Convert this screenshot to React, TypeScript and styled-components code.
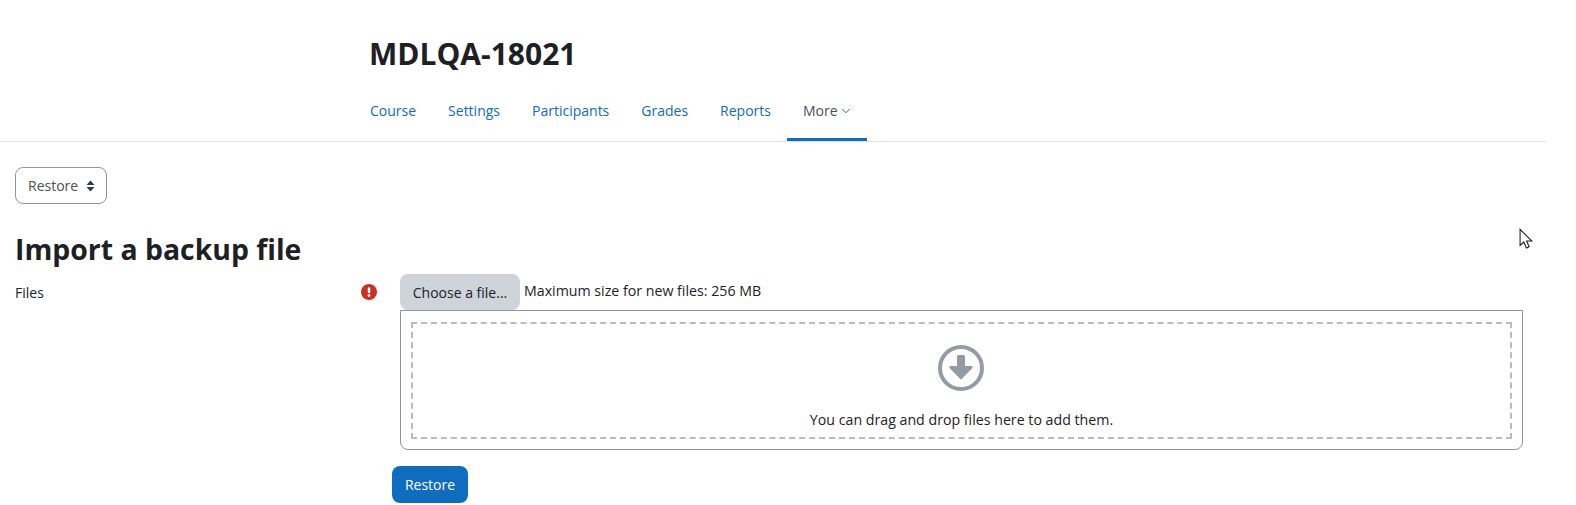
import React from "react";
import styled, { createGlobalStyle } from "styled-components";
import { ChevronDown } from "lucide-react";

const GlobalStyle = createGlobalStyle`
  html, body {
    margin: 0;
    padding: 0;
    background: #fff;
    overflow: hidden;
  }
  body {
    font-family: "Open Sans", "Noto Sans", sans-serif;
    font-size: 14px;
    color: #1d2125;
  }
`;

const Page = styled.div`
  position: relative;
  width: 1576px;
  height: 505px;
  overflow: hidden;
`;

const Header = styled.header`
  width: 1546px;
  height: 142px;
  box-sizing: border-box;
  padding: 32px 0 0 369px;
  border-bottom: 1px solid #dee2e6;
`;

const Title = styled.h1`
  margin: 0;
  height: 44px;
  font-size: 30px;
  line-height: 44px;
  font-weight: 700;
  color: #1d2125;
`;

const Nav = styled.nav`
  display: flex;
  margin: 10px 0 0 -15px;
`;

const Tab = styled.a<{ $active?: boolean }>`
  display: flex;
  align-items: center;
  height: 55px;
  box-sizing: border-box;
  padding: 0 16px 4px;
  color: ${(p) => (p.$active ? "#495057" : "#0f6cbf")};
  border-bottom: 3px solid ${(p) => (p.$active ? "#0f6cbf" : "transparent")};
`;

const TabChevron = styled(ChevronDown)`
  width: 14px;
  height: 14px;
  margin: 2px -2px 0 1px;
  stroke-width: 1.6;
`;

const Main = styled.main`
  padding: 25px 0 0 15px;
`;

const SelectButton = styled.div`
  display: flex;
  align-items: center;
  gap: 8px;
  width: 92px;
  height: 37px;
  box-sizing: border-box;
  padding-left: 12px;
  border: 1px solid #8f959e;
  border-radius: 8px;
  color: #495057;
`;

const Heading = styled.h2`
  margin: 25px 0 0;
  height: 45px;
  font-size: 28.4px;
  line-height: 40px;
  font-weight: 700;
  color: #1d2125;
`;

const FormRow = styled.div`
  display: flex;
`;

const LabelColumn = styled.div`
  display: flex;
  justify-content: space-between;
  width: 362px;
  margin-right: 23px;
  padding-top: 9px;
  line-height: 20px;
`;

const ErrorIcon = styled.svg`
  width: 16px;
  height: 16px;
  margin-top: 1px;
`;

const FieldColumn = styled.div`
  width: 1123px;
`;

const PickerRow = styled.div`
  display: flex;
  align-items: flex-start;
  gap: 4px;
`;

const ChooseButton = styled.div`
  display: flex;
  align-items: center;
  justify-content: center;
  width: 120px;
  height: 36px;
  border-radius: 8px;
  background: #ced4da;
  color: #1d2125;
`;

const LimitText = styled.span`
  margin-top: 7px;
  font-size: 14.2px;
  line-height: 20px;
`;

const DropBox = styled.div`
  box-sizing: border-box;
  height: 140px;
  padding: 11px 10px;
  border: 1px solid #8f959e;
  border-radius: 0 0 8px 8px;
`;

const DropArea = styled.div`
  display: flex;
  flex-direction: column;
  align-items: center;
  box-sizing: border-box;
  height: 117px;
  padding: 21px 2px 0 0;
  border: 2px dashed #bbb;
`;

const DropHint = styled.div`
  margin: 19px -2px 0 0;
  font-size: 14.2px;
  line-height: 20px;
`;

const SubmitButton = styled.button`
  display: block;
  width: 76px;
  height: 37px;
  margin: 16px 0 0 377px;
  padding: 0;
  border: 0;
  border-radius: 8px;
  background: #0f6cbf;
  color: #fff;
  font: inherit;
`;

const Cursor = styled.svg`
  position: absolute;
  left: 1519px;
  top: 228px;
`;

export default function App() {
  return (
    <Page>
      <GlobalStyle />
      <Header>
        <Title>MDLQA-18021</Title>
        <Nav>
          <Tab>Course</Tab>
          <Tab>Settings</Tab>
          <Tab>Participants</Tab>
          <Tab>Grades</Tab>
          <Tab>Reports</Tab>
          <Tab $active>
            More
            <TabChevron />
          </Tab>
        </Nav>
      </Header>
      <Main>
        <SelectButton>
          Restore
          <svg width="9" height="12" viewBox="0 0 9 12">
            <path d="M4.5 0.5 8.5 5H0.5Z M4.5 11.5 0.5 7H8.5Z" fill="#343a40" />
          </svg>
        </SelectButton>
        <Heading>Import a backup file</Heading>
        <FormRow>
          <LabelColumn>
            Files
            <ErrorIcon viewBox="0 0 16 16">
              <circle cx="8" cy="8" r="8" fill="#ca3120" />
              <rect x="6.8" y="3.2" width="2.4" height="6" rx="1" fill="#fff" />
              <circle cx="8" cy="11.6" r="1.4" fill="#fff" />
            </ErrorIcon>
          </LabelColumn>
          <FieldColumn>
            <PickerRow>
              <ChooseButton>Choose a file...</ChooseButton>
              <LimitText>Maximum size for new files: 256 MB</LimitText>
            </PickerRow>
            <DropBox>
              <DropArea>
                <svg width="46" height="46" viewBox="0 0 46 46">
                  <circle cx="23" cy="23" r="21" fill="none" stroke="#959ba4" strokeWidth="4" />
                  <path d="M19 11.5a1.500 1.500 0 0 1 1.500-1.500h5a1.500 1.500 0 0 1 1.500 1.500V21h6.500c1.200 0 1.600 1.200.9 2L24 33.700a1.400 1.400 0 0 1-2 0L11.600 23c-.7-.8-.3-2 .9-2H19z" fill="#959ba4" />
                </svg>
                <DropHint>You can drag and drop files here to add them.</DropHint>
              </DropArea>
            </DropBox>
          </FieldColumn>
        </FormRow>
        <SubmitButton>Restore</SubmitButton>
      </Main>
      <Cursor width="15" height="22" viewBox="0 0 14 20">
        <path d="M1 1v15l3.500-3.200 2.400 5.600 2.600-1.100-2.400-5.400H12Z" fill="#fff" stroke="#1d2125" strokeWidth="1" />
      </Cursor>
    </Page>
  );
}
